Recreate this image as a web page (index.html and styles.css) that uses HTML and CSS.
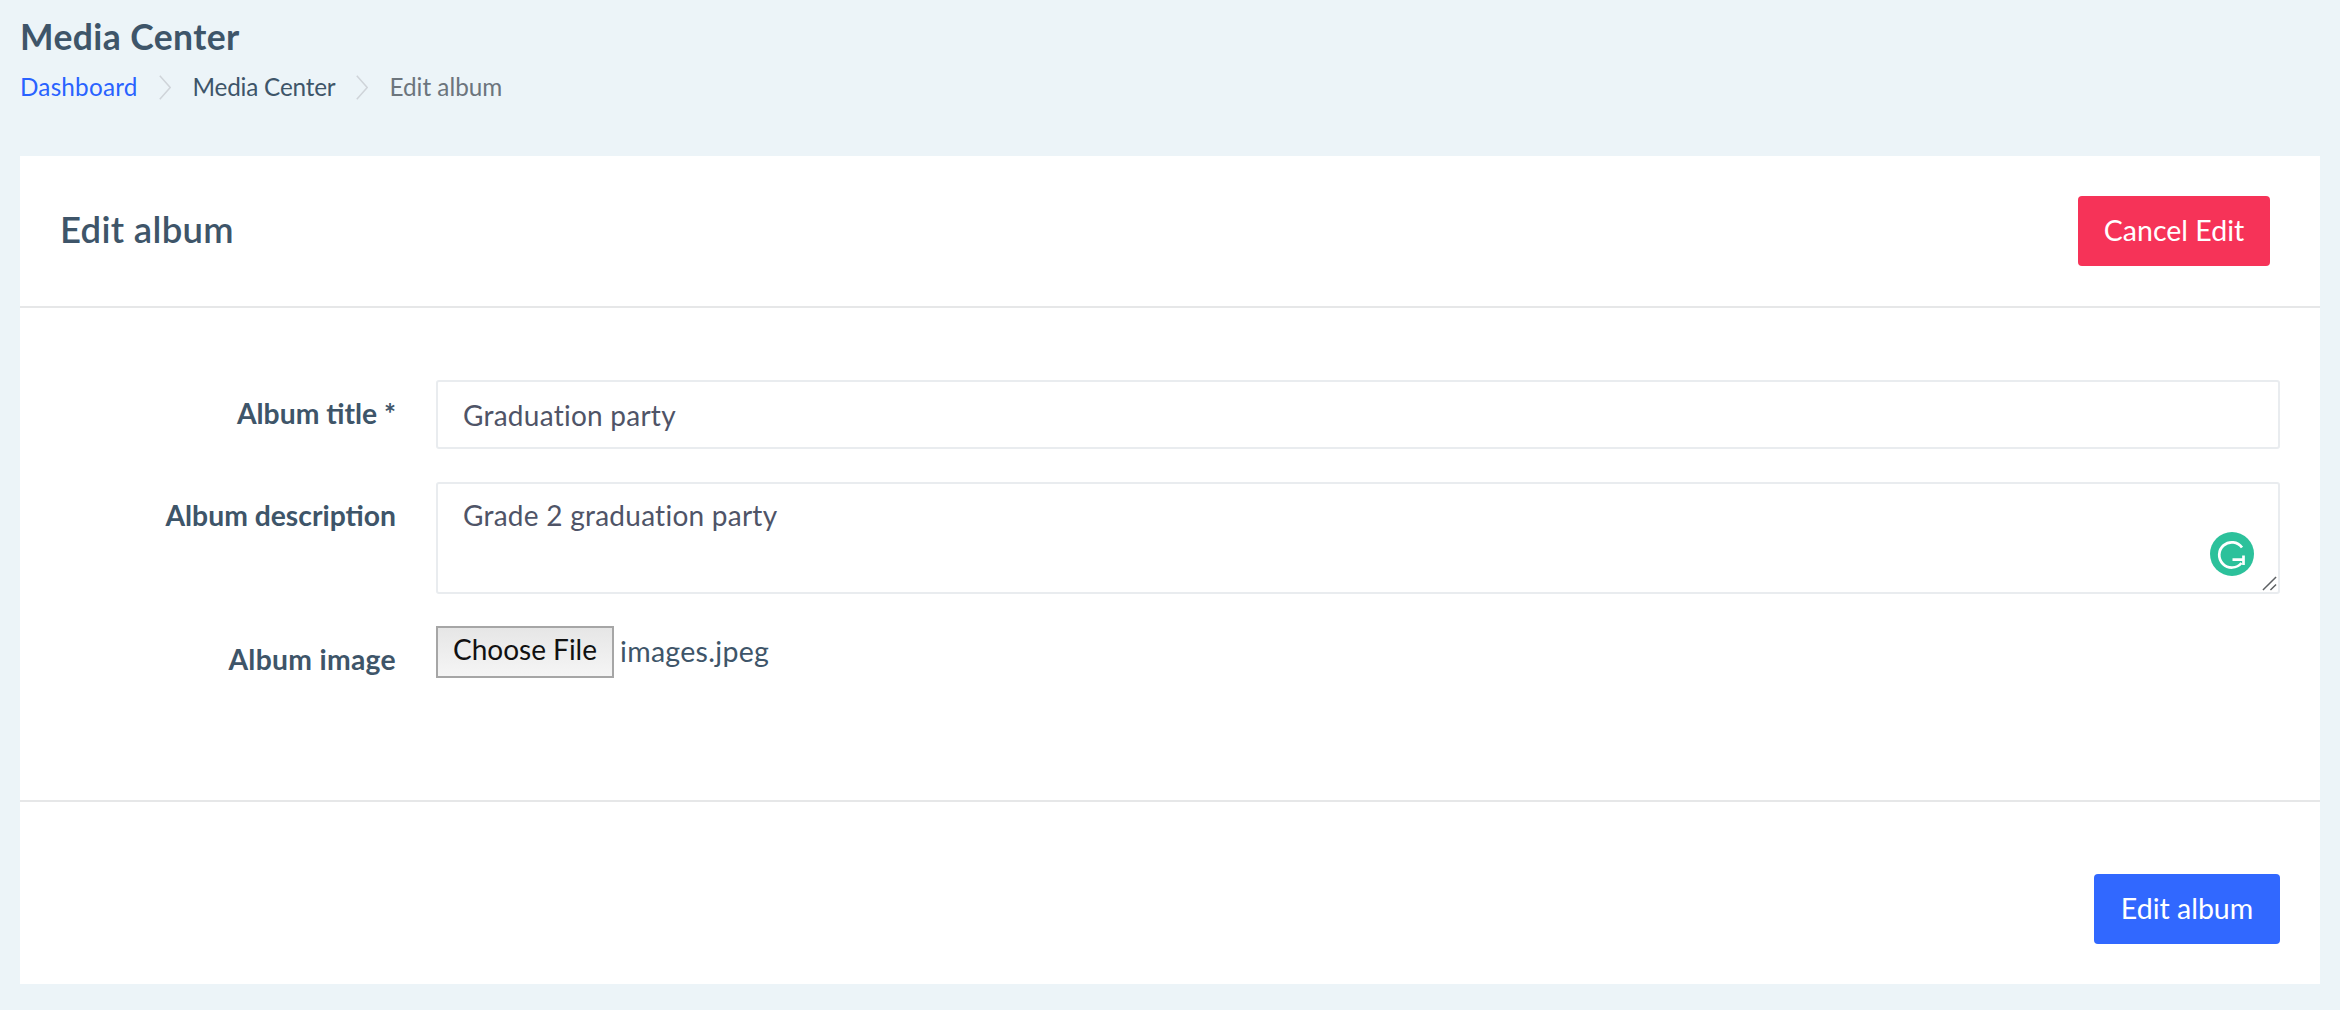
FILE: index.html
```html
<!DOCTYPE html>
<html lang="en">
<head>
<meta charset="utf-8">
<title>Edit album</title>
<link rel="stylesheet" href="styles.css">
</head>
<body>
<header class="page-head">
  <h1 class="page-title">Media Center</h1>
  <nav class="crumbs">
    <a class="crumb-link">Dashboard</a>
    <svg class="chev" viewBox="0 0 12 25"><path d="M.8.7l10.4 11.8L.8 24.3" fill="none" stroke="#cfd4d9" stroke-width="1.5"/></svg>
    <span class="crumb-mid">Media Center</span>
    <svg class="chev" viewBox="0 0 12 25"><path d="M.8.7l10.4 11.8L.8 24.3" fill="none" stroke="#cfd4d9" stroke-width="1.5"/></svg>
    <span class="crumb-now">Edit album</span>
  </nav>
</header>
<main class="card">
  <div class="card-head">
    <h2 class="card-title">Edit album</h2>
    <button class="btn btn-red" type="button">Cancel Edit</button>
  </div>
  <form class="card-body">
    <div class="row row-title">
      <label class="lbl">Album title *</label>
      <input class="field" type="text" value="Graduation party">
    </div>
    <div class="row row-desc">
      <label class="lbl">Album description</label>
      <div class="area-wrap">
        <textarea class="field area">Grade 2 graduation party</textarea>
        <svg class="gram" viewBox="0 0 44 44">
          <circle cx="22" cy="22" r="22" fill="#2cc19b"/>
          <path d="M32 15.5A12.6 12.6 0 1 0 31.5 31" fill="none" stroke="#fff" stroke-width="2.7"/>
          <path d="M22.5 27.7h12.3M33.5 23.5v9.5" fill="none" stroke="#fff" stroke-width="2.7"/>
        </svg>
        <svg class="grip" viewBox="0 0 16 16"><path d="M1 15L15 1M9 15l6-6" fill="none" stroke="#5d6063" stroke-width="1.6"/></svg>
      </div>
    </div>
    <div class="row row-file">
      <label class="lbl lbl-file">Album image</label>
      <div class="file">
        <span class="file-btn">Choose File</span>
        <span class="file-name">images.jpeg</span>
      </div>
    </div>
  </form>
  <div class="card-foot">
    <button class="btn btn-blue" type="button">Edit album</button>
  </div>
</main>
</body>
</html>
```
FILE: styles.css
```css
* { box-sizing: border-box; }
html, body { height: 100%; }
body {
  margin: 0;
  padding: 0 20px;
  background: #ecf4f8;
  color: #3e5569;
  font-family: Lato, "Noto Sans", sans-serif;
  overflow: hidden;
}
.page-head { height: 156px; padding-top: 16px; }
.page-title { margin: 0; font-size: 35.5px; line-height: 42px; font-weight: 700; letter-spacing: 0.4px; color: #3e5569; }
.crumbs { display: flex; align-items: center; margin-top: 14px; font-size: 24.3px; line-height: 30px; }
.crumb-link { color: #2962ff; letter-spacing: 0.2px; }
.crumb-mid { color: #3e5569; letter-spacing: -0.2px; margin-left: 1px; }
.crumb-now { color: #6c757d; }
.chev { width: 12px; height: 25px; margin: 0 21px; }
.card { background: #fff; height: 828px; display: flex; flex-direction: column; }
.card-head {
  height: 152px;
  padding: 40px 50px 0 40px;
  display: flex;
  justify-content: space-between;
  align-items: flex-start;
  border-bottom: 2px solid #e6e7e8;
}
.card-title { margin: 12px 0 0; font-size: 36.5px; line-height: 42px; font-weight: 600; letter-spacing: 0.3px; color: #3e5569; }
.btn {
  height: 70px;
  border: 0;
  border-radius: 4px;
  color: #fff;
  font-family: inherit;
  font-size: 28.5px;
  padding: 0 0 2px;
}
.btn-red { width: 192px; background: #f63358; }
.btn-blue { width: 186px; background: #3168ff; }
.card-body { height: 494px; padding: 72px 40px 0 0; border-bottom: 2px solid #e6e7e8; }
.row { display: grid; grid-template-columns: 376px 1fr; column-gap: 40px; align-items: start; }
.row-title { height: 102px; }
.row-desc { height: 144px; }
.lbl { text-align: right; font-size: 28.3px; line-height: 33px; font-weight: 700; color: #3e5569; padding-top: 17px; }
.lbl-file { padding-top: 17px; letter-spacing: 0.3px; }
.field {
  display: block;
  width: 100%;
  height: 69px;
  border: 2px solid #e9ecef;
  border-radius: 3px;
  padding: 0 25px;
  background: #fff;
  color: #4f5467;
  font-family: inherit;
  font-size: 28px;
  letter-spacing: 0.25px;
  outline: none;
}
.area-wrap { position: relative; height: 112px; }
.area { height: 112px; padding-top: 15px; line-height: 33px; resize: none; }
.gram { position: absolute; right: 26px; top: 50px; width: 44px; height: 44px; }
.grip { position: absolute; right: 3px; bottom: 3px; width: 15px; height: 15px; }
.file { display: flex; align-items: center; height: 52px; }
.file-btn {
  width: 178px;
  height: 52px;
  border: 2px solid #a6a6a6;
  background: linear-gradient(#e6e6e6, #f5f5f5);
  color: #111;
  font-size: 28px;
  line-height: 42px;
  text-align: center;
}
.file-name { margin-left: 6px; padding-bottom: 2px; font-size: 28.5px; letter-spacing: 0.3px; color: #3e5569; }
.card-foot { flex: 1; padding: 72px 40px 0 0; display: flex; justify-content: flex-end; align-items: flex-start; }
```
